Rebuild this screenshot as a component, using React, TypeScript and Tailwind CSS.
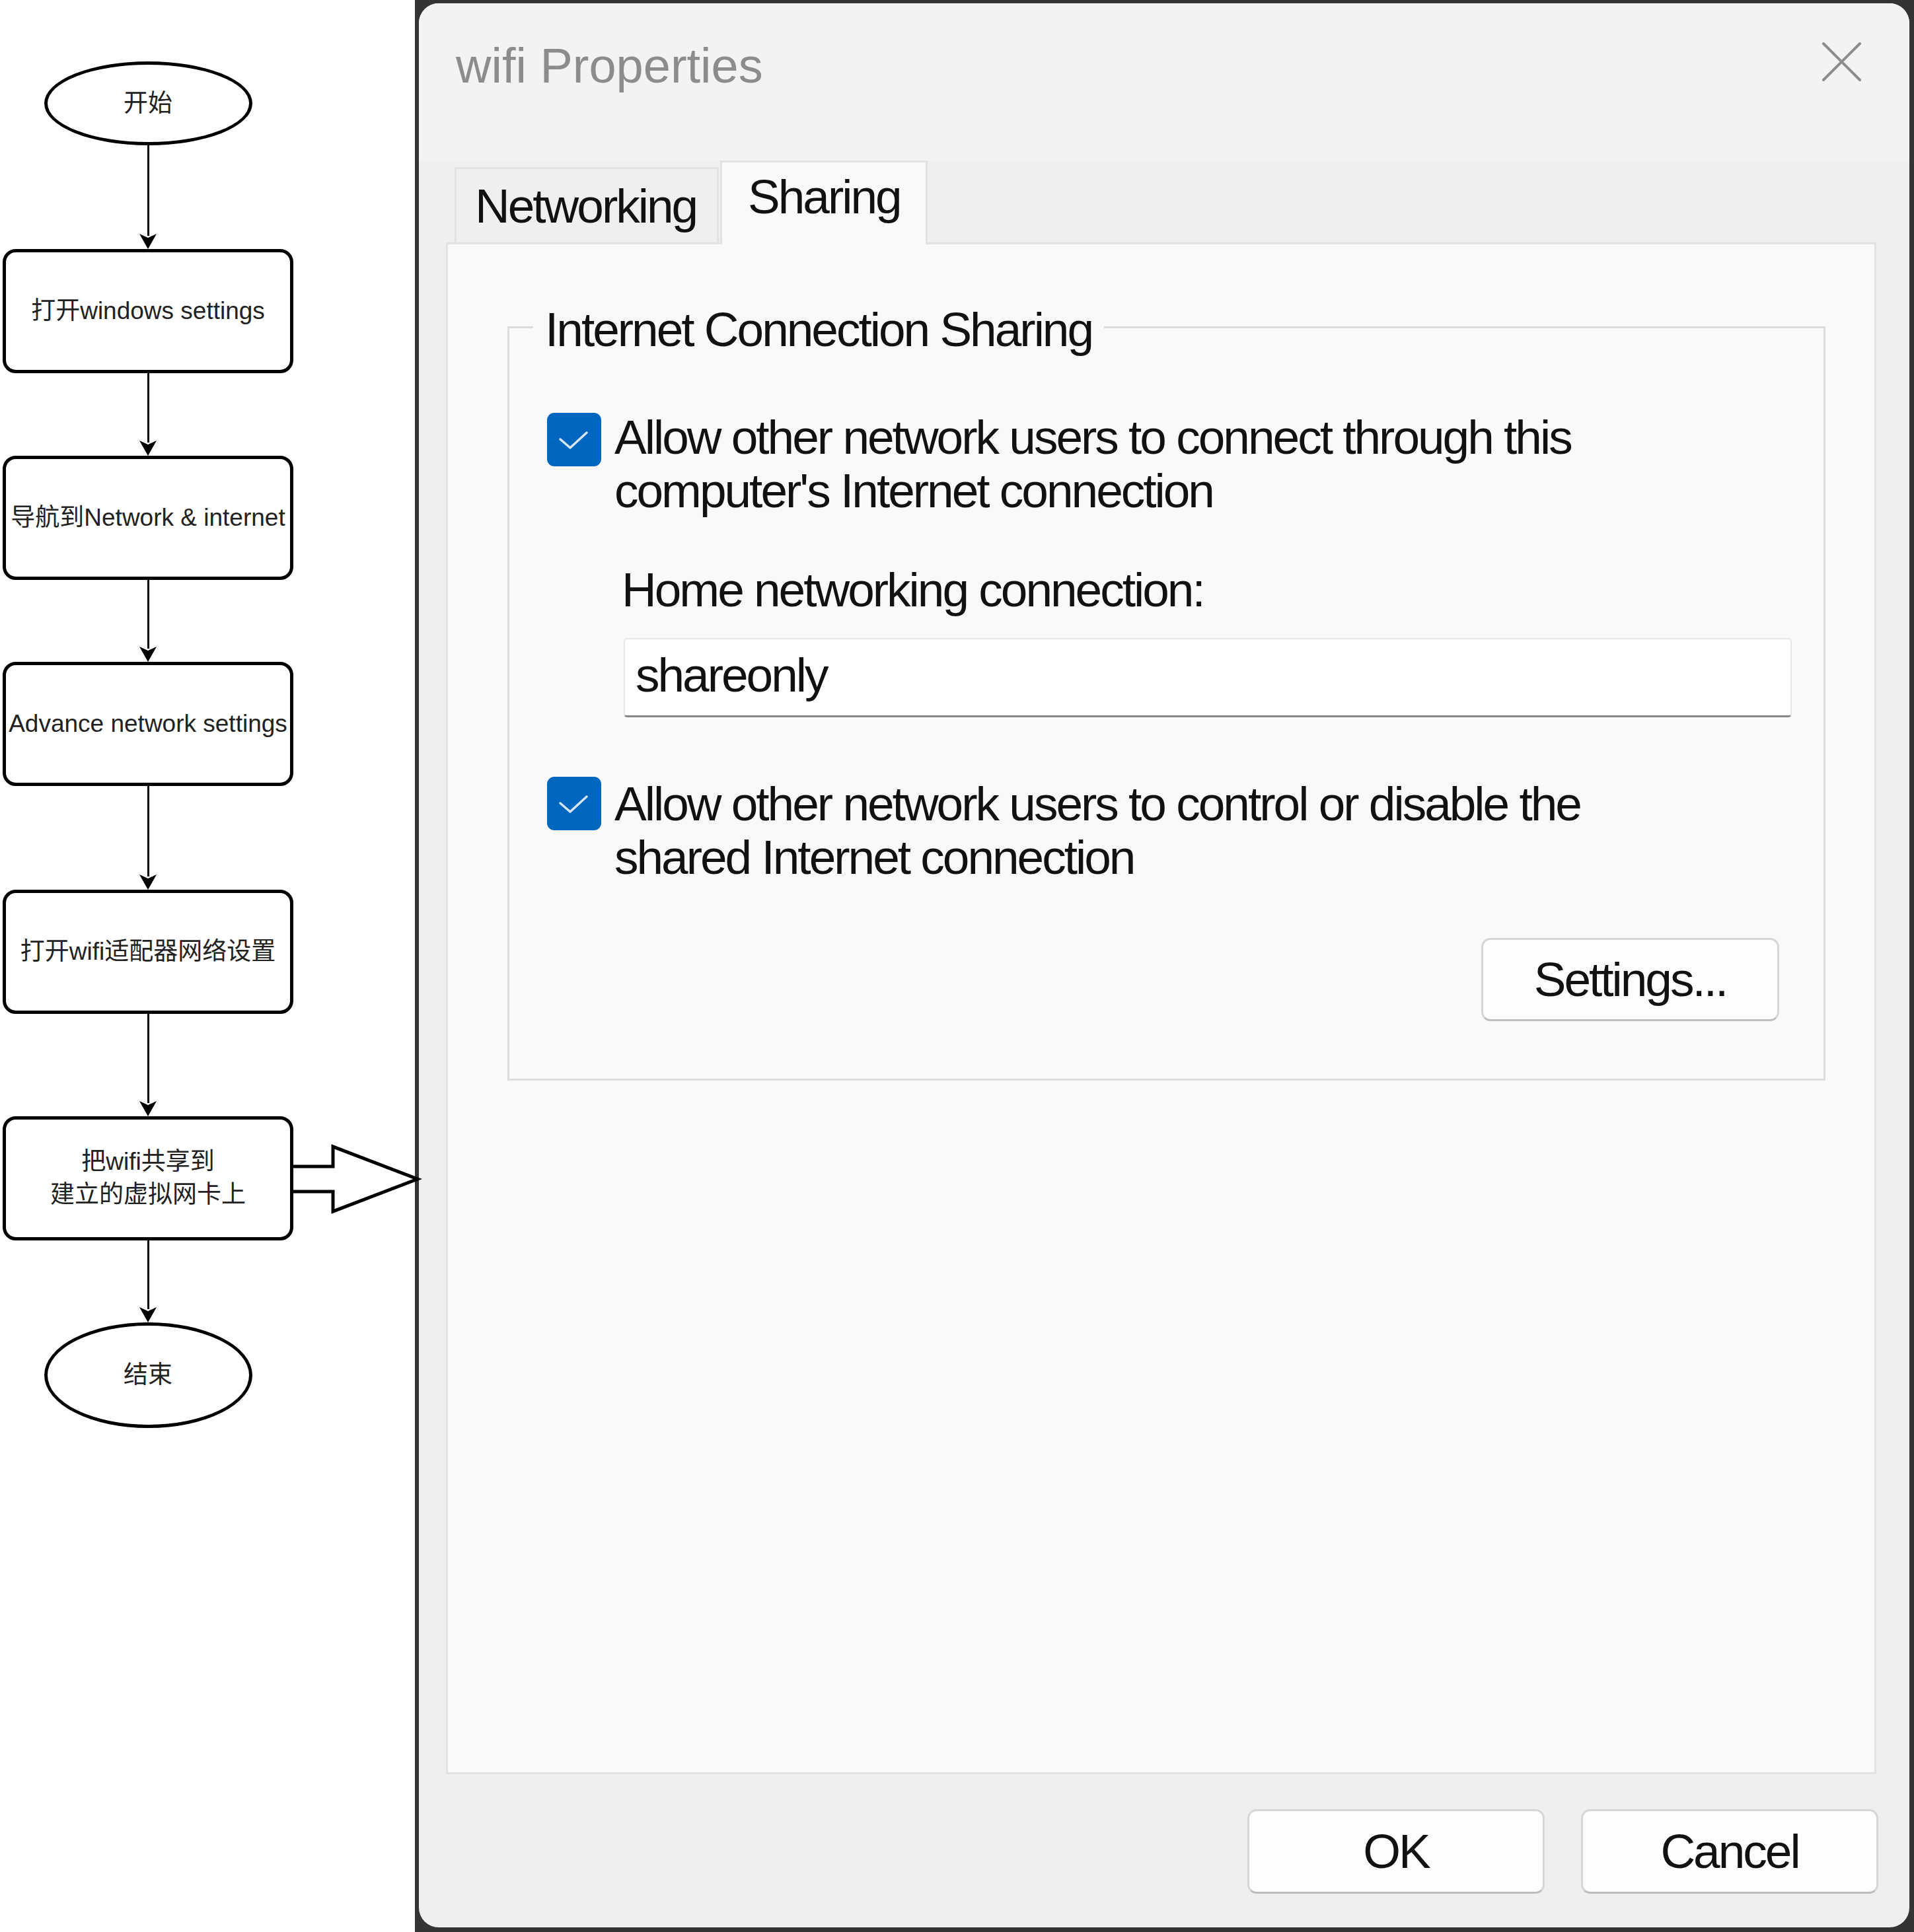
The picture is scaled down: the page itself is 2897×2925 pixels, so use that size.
import React from "react";

function Connector({ className }: { className: string }) {
  return (
    <div className={`flex flex-col items-center ${className}`}>
      <div className="w-[3px] flex-1 bg-black" />
      <svg width="28" height="24" viewBox="0 0 28 24" className="-mt-[4px] block">
        <path d="M14 24 L1 1 L14 7 L27 1 Z" fill="black" />
      </svg>
    </div>
  );
}

function Box({ children, className = "" }: { children: React.ReactNode; className?: string }) {
  return (
    <div
      className={`relative w-[440px] h-[188px] shrink-0 border-[5px] border-black rounded-[20px] bg-white flex items-center justify-center text-center text-[37px] leading-[50px] text-[#222] whitespace-nowrap ${className}`}
    >
      {children}
    </div>
  );
}

function Check({ className = "" }: { className?: string }) {
  return (
    <div className={`w-[82px] h-[81px] shrink-0 rounded-[11px] bg-[#0067c0] flex items-start ${className}`}>
      <svg width="82" height="81" viewBox="0 0 82 81">
        <path d="M20 40 L35 53 L60 30" fill="none" stroke="#d6e6f7" strokeWidth="3.5" strokeLinecap="round" strokeLinejoin="round" />
      </svg>
    </div>
  );
}

export default function App() {
  return (
    <div className="w-[2897px] h-[2925px] flex overflow-hidden bg-white">
      {/* Flowchart */}
      <div className="w-[628px] shrink-0 bg-white pt-[93px] pl-[4px] font-['Liberation_Sans','Noto_Sans_CJK_SC',sans-serif]">
        <div className="w-[440px] flex flex-col items-center">
          <div className="w-[315px] h-[127px] shrink-0 rounded-[50%] border-[5px] border-black bg-white flex items-center justify-center text-[37px] text-[#222]">
            开始
          </div>
          <Connector className="h-[157px]" />
          <Box className="h-[186px]">打开windows settings</Box>
          <Connector className="h-[125px]" />
          <Box>导航到Network &amp; internet</Box>
          <Connector className="h-[124px]" />
          <Box>Advance network settings</Box>
          <Connector className="h-[157px]" />
          <Box>打开wifi适配器网络设置</Box>
          <Connector className="h-[155px]" />
          <Box>
            <span>
              把wifi共享到
              <br />
              建立的虚拟网卡上
            </span>
            <svg
              className="absolute left-[431px] top-[37px] overflow-visible"
              width="196"
              height="108"
              viewBox="0 0 196 108"
            >
              <path
                d="M4 34 H64 V4 L192 53 L64 102 V72 H4"
                fill="white"
                stroke="black"
                strokeWidth="5"
                strokeLinejoin="miter"
              />
            </svg>
          </Box>
          <Connector className="h-[124px]" />
          <div className="w-[315px] h-[160px] shrink-0 rounded-[50%] border-[5px] border-black bg-white flex items-center justify-center text-[37px] text-[#222]">
            结束
          </div>
        </div>
      </div>

      {/* Dialog */}
      <div className="flex-1 h-[2925px] bg-[#343434] pt-[5px] pl-[6px] pr-[7px] pb-[7px]">
        <div className="h-full rounded-[30px] bg-[#efefef] flex flex-col overflow-hidden font-['Liberation_Sans',sans-serif] text-[#111]">
          {/* Title bar */}
          <div className="h-[238px] shrink-0 bg-[#f3f3f3] flex justify-between items-start">
            <div className="pl-[56px] pt-[58px] text-[74px] leading-[74px] text-[#8c8c8c] whitespace-nowrap">
              wifi Properties
            </div>
            <svg className="mt-[58px] mr-[72px]" width="61" height="61" viewBox="0 0 61 61">
              <path d="M3 3 L58 58 M58 3 L3 58" stroke="#8c8c8c" strokeWidth="4" strokeLinecap="round" />
            </svg>
          </div>

          {/* Tabs */}
          <div className="h-[124px] shrink-0 flex items-end pl-[54px] text-[73px] leading-[72px] tracking-[-3px]">
            <div className="w-[400px] h-[114px] border-[3px] border-b-0 border-[#e2e2e2] bg-[#efefef] pl-[28px] pt-[20px] whitespace-nowrap">
              Networking
            </div>
            <div className="relative z-10 ml-[2px] -mb-[3px] w-[314px] h-[127px] border-[3px] border-b-0 border-[#e2e2e2] bg-[#f9f9f9] pl-[39px] pt-[16px] whitespace-nowrap">
              Sharing
            </div>
          </div>

          {/* Panel */}
          <div className="flex-1 ml-[41px] mr-[50px] border-[3px] border-[#e3e3e3] bg-[#f9f9f9] pt-[124px] pl-[90px] pr-[74px] text-[73px] tracking-[-3px]">
            <div className="relative border-[3px] border-[#dcdcdc] pt-[124px] pl-[57px] pr-[48px] pb-[87px] flex flex-col">
              <div className="absolute left-[36px] -top-[34px] px-[18px] bg-[#f9f9f9] leading-[72px] whitespace-nowrap">
                Internet Connection Sharing
              </div>

              <div className="flex items-start gap-[20px]">
                <Check className="mt-[4px]" />
                <div className="leading-[81px] whitespace-nowrap">
                  Allow other network users to connect through this
                  <br />
                  computer&apos;s Internet connection
                </div>
              </div>

              <div className="mt-[69px] ml-[113px] leading-[81px] whitespace-nowrap">Home networking connection:</div>

              <div className="mt-[33px] ml-[116px] h-[120px] bg-white border-[2px] border-[#e6e6e6] border-b-[3px] border-b-[#868686] rounded-[5px] pl-[16px] pt-[13px] leading-[81px]">
                shareonly
              </div>

              <div className="mt-[90px] flex items-start gap-[20px]">
                <Check />
                <div className="leading-[81px] whitespace-nowrap">
                  Allow other network users to control or disable the
                  <br />
                  shared Internet connection
                </div>
              </div>

              <button className="mt-[82px] self-end mr-[19px] w-[451px] h-[126px] rounded-[14px] bg-[#fdfdfd] border-[3px] border-[#d6d6d6] border-b-[#bdbdbd] flex items-center justify-center leading-[72px]">
                Settings...
              </button>
            </div>
          </div>

          {/* Footer */}
          <div className="shrink-0 flex justify-end gap-[55px] pt-[53px] pb-[51px] pr-[47px] text-[73px] tracking-[-3px]">
            <button className="w-[450px] h-[128px] rounded-[14px] bg-[#fdfdfd] border-[3px] border-[#d6d6d6] border-b-[#bdbdbd] flex items-center justify-center leading-[72px]">
              OK
            </button>
            <button className="w-[450px] h-[128px] rounded-[14px] bg-[#fdfdfd] border-[3px] border-[#d6d6d6] border-b-[#bdbdbd] flex items-center justify-center leading-[72px]">
              Cancel
            </button>
          </div>
        </div>
      </div>
    </div>
  );
}
